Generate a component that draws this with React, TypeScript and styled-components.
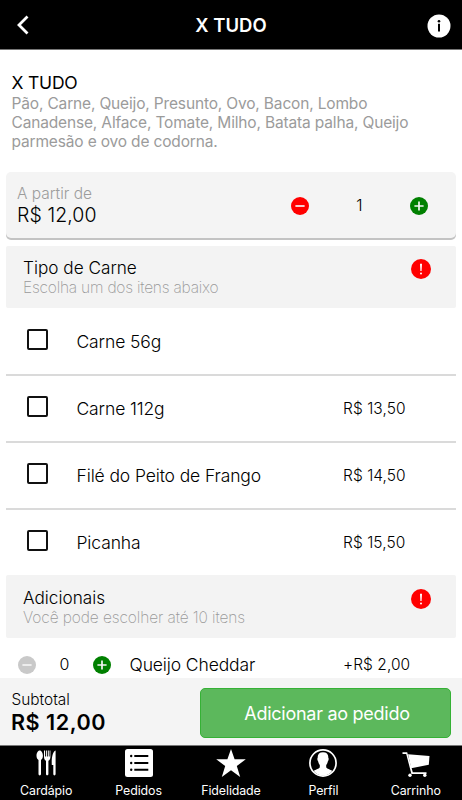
import React from "react";
import styled, { createGlobalStyle } from "styled-components";

const GlobalStyle = createGlobalStyle`
  * { box-sizing: border-box; }
  body { margin: 0; background: #fff; font-family: Inter, sans-serif; color: #000; }
  svg { display: block; flex: none; }
`;

const Screen = styled.div`
  width: 462px;
  height: 800px;
  display: flex;
  flex-direction: column;
  overflow: hidden;
  background: #fff;
`;

const Header = styled.header`
  flex: none;
  height: 50px;
  display: grid;
  grid-template-columns: 48px 1fr 48px;
  align-items: center;
  background: #000;
  border-bottom: 1px solid #777;
  color: #fff;
`;

const HeaderTitle = styled.h1`
  margin: 0;
  text-align: center;
  font-size: 18.5px;
  font-weight: 600;
  line-height: 24px;
`;

const IconButton = styled.button<{ $left: number; $top?: number }>`
  padding: ${(p) => p.$top ?? 0}px 0 0 ${(p) => p.$left}px;
  border: 0;
  background: none;
`;

const Content = styled.main`
  flex: 1;
  min-height: 0;
  overflow: hidden;
  padding: 0 6px;
`;

const Intro = styled.section`
  height: 122px;
  padding: 22px 6px 0 5.5px;
`;

const ProductName = styled.h2`
  margin: 0;
  font-size: 17.5px;
  font-weight: 370;
  line-height: 22px;
  letter-spacing: -0.2px;
`;

const Description = styled.p`
  margin: 0;
  width: 420px;
  color: #9b9b9b;
  font-size: 15.5px;
  font-weight: 380;
  line-height: 19px;
  letter-spacing: -0.16px;
`;

const PriceCard = styled.section`
  height: 66px;
  margin-bottom: 8px;
  display: flex;
  align-items: center;
  background: #f4f4f4;
  border-radius: 5px;
  box-shadow: 0 2px 0 #c3c3c3;
`;

const CardPrice = styled.div`
  flex: 1;
  padding: 0 0 2px 11px;
`;

const FromLabel = styled.div`
  color: #9c9c9c;
  font-size: 15.5px;
  font-weight: 350;
  line-height: 21px;
`;

const FromPrice = styled.div`
  font-size: 19.5px;
  font-weight: 350;
  line-height: 22px;
  letter-spacing: 0.08px;
`;

const Stepper = styled.div<{ $width: number; $right: number; $top?: number }>`
  width: ${(p) => p.$width}px;
  margin-right: ${(p) => p.$right}px;
  padding-top: ${(p) => p.$top ?? 0}px;
  display: flex;
  align-items: center;
  justify-content: space-between;
`;

const Quantity = styled.span`
  font-size: 16px;
  font-weight: 350;
  line-height: 20px;
  padding-bottom: 3px;
`;

const GroupHeader = styled.header<{ $height: number }>`
  height: ${(p) => p.$height}px;
  padding: ${(p) => p.$height - 50}px 25.5px 0 17px;
  display: flex;
  justify-content: space-between;
  background: #f3f3f3;
  border-radius: 2px;
`;

const GroupTitle = styled.h3`
  margin: 0;
  font-size: 17.2px;
  font-weight: 350;
  line-height: 20px;
  letter-spacing: 0;
`;

const GroupHint = styled.p<{ $spacing: number }>`
  margin: 0;
  color: #999;
  font-size: 15.5px;
  font-weight: 200;
  line-height: 20px;
  letter-spacing: ${(p) => p.$spacing}px;
`;

const AlertSlot = styled.div`
  padding-top: 1px;
`;

const OptionRow = styled.label<{ $first?: boolean }>`
  height: ${(p) => (p.$first ? 66 : 67)}px;
  padding-top: ${(p) => (p.$first ? 1 : 0)}px;
  border-top: ${(p) => (p.$first ? "0" : "2px solid #dadada")};
  display: grid;
  grid-template-columns: 70.5px 1fr 113px;
  align-items: center;
`;

const Checkbox = styled.span`
  width: 21px;
  height: 21px;
  margin: 0 0 4px 21px;
  border: 2px solid #111;
  border-radius: 2px;
`;

const OptionName = styled.span`
  font-size: 17.5px;
  font-weight: 350;
  line-height: 22px;
  letter-spacing: -0.12px;
`;

const OptionPrice = styled.span`
  font-size: 15.5px;
  font-weight: 350;
  line-height: 22px;
  letter-spacing: 0.06px;
`;

const ExtraRow = styled.div`
  height: 54px;
  padding-left: 12px;
  display: grid;
  grid-template-columns: 111.5px 1fr 113px;
  align-items: center;
`;

const Checkout = styled.section`
  flex: none;
  height: 67px;
  padding: 0 11px;
  display: flex;
  align-items: center;
  justify-content: space-between;
  background: #f4f4f4;
`;

const SubtotalLabel = styled.div`
  font-size: 15.4px;
  font-weight: 350;
  line-height: 21px;
  padding-left: 0.5px;
`;

const SubtotalValue = styled.div`
  font-size: 21.6px;
  font-weight: 620;
  line-height: 25px;
  letter-spacing: 0.5px;
`;

const AddButton = styled.button`
  width: 251px;
  height: 50px;
  margin-top: 3px;
  padding: 0 0 0 3px;
  border: 1px solid #35b135;
  border-radius: 5px;
  background: #5cb85c;
  color: #fff;
  font: 380 18px Inter, sans-serif;
  letter-spacing: -0.27px;
`;

const TabBar = styled.nav`
  flex: none;
  height: 55px;
  display: grid;
  grid-template-columns: repeat(5, 1fr);
  background: #000;
  border-top: 1px solid #777;
`;

const Tab = styled.a`
  display: flex;
  flex-direction: column;
  align-items: center;
  padding-top: 3px;
  color: #fff;
`;

const TabLabel = styled.span`
  margin-top: 6px;
  font-size: 12.4px;
  line-height: 16px;
  letter-spacing: -0.1px;
`;

const BackIcon = () => (
  <svg width="12" height="20" viewBox="0 0 12 20" fill="none" stroke="#fff" strokeWidth="2.8">
    <path d="M10.500 1.500 2 10l8.500 8.500" />
  </svg>
);

const InfoIcon = () => (
  <svg width="24" height="24" viewBox="0 0 24 24">
    <circle cx="12" cy="12" r="11.500" fill="#fff" />
    <circle cx="12" cy="7.300" r="1.300" />
    <path d="M11 9.800h2v7.600h-2z" />
  </svg>
);

const RoundIcon = ({ kind, color }: { kind: "minus" | "plus"; color: string }) => (
  <svg width="18" height="18" viewBox="0 0 18 18" stroke="#f4f4f4" strokeWidth="1.700">
    <circle cx="9" cy="9" r="9" fill={color} stroke="none" />
    <path d={kind === "plus" ? "M4.400 9h9.200M9 4.400v9.200" : "M4.400 9h9.200"} />
  </svg>
);

const AlertIcon = () => (
  <svg width="20" height="20" viewBox="0 0 20 20" fill="#fff">
    <circle cx="10" cy="10" r="10" fill="red" />
    <path d="M9 4.700h2l-.4 7.300H9.400z" />
    <circle cx="10" cy="14.400" r="1" />
  </svg>
);

const CutleryIcon = () => (
  <svg width="28" height="28" viewBox="0 0 28 28" fill="#fff">
    <path d="M7.700 1.600c1.900 0 3.200 2.700 3.200 5.200 0 2.200-.9 3.500-1.900 4.200V25c0 1.900-2.500 1.900-2.500 0V11c-1.100-.7-2-2-2-4.200 0-2.500 1.300-5.200 3.200-5.200z" />
    <path d="M12 1.400h1v6h.9v-6h1v6h.9v-6h1v6h.8v-6h.8v6.400c0 2.200-.7 3.300-2 4V25c0 1.800-2.400 1.800-2.400 0V11.800c-1.300-.7-2-1.800-2-4z" />
    <path d="M23.600 1.400V25c0 1.900-2.300 1.900-2.300 0V16h-1.500C19.400 9.500 20.400 2.600 23.600 1.400z" />
  </svg>
);

const OrdersIcon = () => (
  <svg width="28" height="28" viewBox="0 0 28 28">
    <rect width="28" height="28" rx="2.500" fill="#fff" />
    <path d="M9.300 7h14M9.300 14h14M9.300 20.700h14" stroke="#000" strokeWidth="1.900" />
    <circle cx="6.200" cy="7" r="1.200" />
    <circle cx="6.200" cy="14" r="1.200" />
    <circle cx="6.200" cy="20.700" r="1.200" />
  </svg>
);

const StarIcon = () => (
  <svg width="30" height="28" viewBox="0 0 30 28" fill="#fff">
    <path d="M15 0l3.600 10.300H29.800l-9 6.700L24.200 28 15 21.300 5.800 28l3.400-11-9-6.700h11.200z" />
  </svg>
);

const ProfileIcon = () => (
  <svg width="28" height="28" viewBox="0 0 28 28" fill="#fff">
    <circle cx="14" cy="14" r="13.100" fill="none" stroke="#fff" strokeWidth="1.700" />
    <path d="M14 3.300c3.800 0 5.600 2.200 5.300 5.800.6.100.5 2.200-.4 3.100-.3 1.900-1.100 3-1.700 3.700v2.400c.5 1.700 4.100 2 6 3.700A12.500 12.500 0 0 1 14 26.700 12.500 12.500 0 0 1 4.800 22c1.900-1.700 5.500-2 6-3.700v-2.400c-.6-.7-1.400-1.800-1.700-3.700-.9-.9-1-3-.4-3.100C8.400 5.500 10.200 3.300 14 3.300z" />
  </svg>
);

const CartIcon = () => (
  <svg width="28" height="28" viewBox="0 0 28 28" fill="#fff">
    <path d="M.5 3.200h4.700l5.600 20h13.700v1.800H9.400L4.200 5H.5z" />
    <path d="M6 5.200l21.500 1.700L26.800 15.800 9.200 19.200z" />
    <circle cx="8" cy="26.300" r="1.700" />
    <circle cx="22.800" cy="26.300" r="1.700" />
  </svg>
);

const options = [
  { name: "Carne 56g", price: "" },
  { name: "Carne 112g", price: "R$ 13,50" },
  { name: "Filé do Peito de Frango", price: "R$ 14,50" },
  { name: "Picanha", price: "R$ 15,50" },
];

const tabs = [
  { label: "Cardápio", Icon: CutleryIcon },
  { label: "Pedidos", Icon: OrdersIcon },
  { label: "Fidelidade", Icon: StarIcon },
  { label: "Perfil", Icon: ProfileIcon },
  { label: "Carrinho", Icon: CartIcon },
];

function Group({ title, hint, height, spacing }: { title: string; hint: string; height: number; spacing: number }) {
  return (
    <GroupHeader $height={height}>
      <div>
        <GroupTitle>{title}</GroupTitle>
        <GroupHint $spacing={spacing}>{hint}</GroupHint>
      </div>
      <AlertSlot>
        <AlertIcon />
      </AlertSlot>
    </GroupHeader>
  );
}

export default function App() {
  return (
    <Screen>
      <GlobalStyle />
      <Header>
        <IconButton $left={17} aria-label="Voltar">
          <BackIcon />
        </IconButton>
        <HeaderTitle>X TUDO</HeaderTitle>
        <IconButton $left={13} $top={3} aria-label="Informações">
          <InfoIcon />
        </IconButton>
      </Header>

      <Content>
        <Intro>
          <ProductName>X TUDO</ProductName>
          <Description>
            Pão, Carne, Queijo, Presunto, Ovo, Bacon, Lombo
            <br />
            Canadense, Alface, Tomate, Milho, Batata palha, Queijo
            <br />
            parmesão e ovo de codorna.
          </Description>
        </Intro>

        <PriceCard>
          <CardPrice>
            <FromLabel>A partir de</FromLabel>
            <FromPrice>R$ 12,00</FromPrice>
          </CardPrice>
          <Stepper $width={138} $right={27.5} $top={2}>
            <RoundIcon kind="minus" color="red" />
            <Quantity>1</Quantity>
            <RoundIcon kind="plus" color="green" />
          </Stepper>
        </PriceCard>

        <Group title="Tipo de Carne" hint="Escolha um dos itens abaixo" height={62} spacing={-0.21} />
        {options.map((o, i) => (
          <OptionRow key={o.name} $first={i === 0}>
            <Checkbox />
            <OptionName>{o.name}</OptionName>
            <OptionPrice>{o.price}</OptionPrice>
          </OptionRow>
        ))}

        <Group title="Adicionais" hint="Você pode escolher até 10 itens" height={63} spacing={-0.1} />
        <ExtraRow>
          <Stepper $width={93} $right={18}>
            <RoundIcon kind="minus" color="#c9c9c9" />
            <Quantity>0</Quantity>
            <RoundIcon kind="plus" color="green" />
          </Stepper>
          <OptionName>Queijo Cheddar</OptionName>
          <OptionPrice>+R$ 2,00</OptionPrice>
        </ExtraRow>
      </Content>

      <Checkout>
        <div>
          <SubtotalLabel>Subtotal</SubtotalLabel>
          <SubtotalValue>R$ 12,00</SubtotalValue>
        </div>
        <AddButton>Adicionar ao pedido</AddButton>
      </Checkout>

      <TabBar>
        {tabs.map(({ label, Icon }) => (
          <Tab key={label}>
            <Icon />
            <TabLabel>{label}</TabLabel>
          </Tab>
        ))}
      </TabBar>
    </Screen>
  );
}
